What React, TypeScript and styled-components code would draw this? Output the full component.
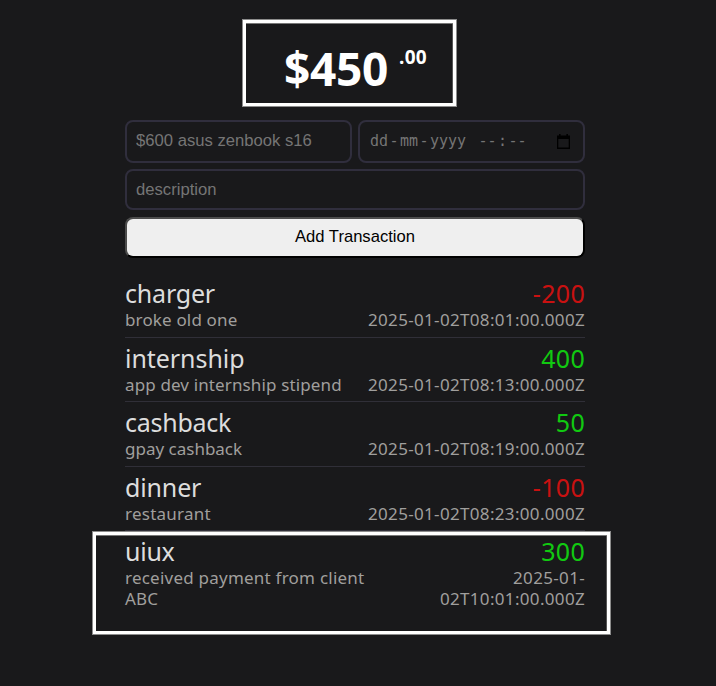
import React from 'react';
import styled, { createGlobalStyle, css } from 'styled-components';

const GlobalStyle = createGlobalStyle`
  *, *::before, *::after { box-sizing: border-box; }
  html, body { margin: 0; background: #19191b; }
  body { font-family: "Noto Sans", sans-serif; color: #ddd; overflow: hidden; }
`;

const Page = styled.main`
  width: 460px;
  height: 686px;
  margin-left: 125px;
  display: flex;
  flex-direction: column;
`;

const highlight = css`
  content: "";
  position: absolute;
  border: 3px solid #fff;
  box-shadow: 0 0 0 1px #8c8c8c, inset 0 1px #777, inset -1px 0 #555;
  pointer-events: none;
`;

const Balance = styled.h1`
  position: relative;
  margin: 0;
  height: 120px;
  padding: 37px 0 0 159px;
  display: flex;
  align-items: flex-start;
  gap: 11px;
  color: #fff;
  font-size: 46px;
  font-weight: 700;
  line-height: 62px;
  letter-spacing: -0.3px;

  &::after {
    ${highlight}
    left: 118px;
    top: 20px;
    width: 213px;
    height: 86px;
  }
`;

const Cents = styled.span`
  font-size: 19px;
  line-height: 26px;
  margin-top: 7px;
  letter-spacing: 0.3px;
`;

const Form = styled.form`
  display: flex;
  flex-direction: column;
`;

const Basic = styled.div`
  display: grid;
  grid-template-columns: 1fr 1fr;
  gap: 6px;
  margin-bottom: 6px;
`;

const field = css`
  border: 2px solid #302e3d;
  border-radius: 8px;
  background: transparent;
  color: #757575;
  font-family: "Liberation Sans", Arial, sans-serif;
  font-size: 16.65px;
`;

const TextField = styled.input<{ $height: number; $bottom: number }>`
  ${field}
  width: 100%;
  height: ${(p) => p.$height}px;
  padding: 0 9px ${(p) => p.$bottom}px;
  outline: none;
  &::placeholder { color: #757575; opacity: 1; }
`;

const DateField = styled.div`
  ${field}
  height: 43px;
  padding: 0 13px 0 10px;
  display: flex;
  align-items: center;
  justify-content: space-between;
`;

const DateParts = styled.span`
  display: flex;
  font-family: "DejaVu Sans Mono", monospace;
  font-size: 15px;
  line-height: 18px;
  margin-top: -1px;
`;

const Part = styled.span<{ $width: number }>`
  width: ${(p) => p.$width}px;
  text-align: center;
  white-space: pre;
`;

const AddButton = styled.button`
  height: 41px;
  margin-top: 7px;
  padding: 0 0 1px;
  border: 2px outset #000;
  border-color: #4c4c4c #000 #000 #4c4c4c;
  border-radius: 8px;
  background: #efefef;
  color: #000;
  font: 16.6px "Liberation Sans", Arial, sans-serif;
`;

const Transactions = styled.ul`
  list-style: none;
  margin: 15.5px 0 0;
  padding: 0;
`;

const Transaction = styled.li`
  position: relative;
  display: flex;
  justify-content: space-between;
  height: 64.4px;
  padding-top: 4.95px;
  border-bottom: 1px solid #302f38;

  &:last-child { border-bottom: 0; }
  &:last-child::after {
    ${highlight}
    left: -32px;
    top: 1px;
    width: 517px;
    height: 102px;
  }
`;

const Side = styled.div<{ $end?: boolean }>`
  display: flex;
  flex-direction: column;
  align-items: ${(p) => (p.$end ? 'flex-end' : 'flex-start')};
`;

const Name = styled.span<{ $tracking: number }>`
  font-size: 25px;
  line-height: 31px;
  letter-spacing: ${(p) => p.$tracking}px;
`;

const Price = styled.span<{ $negative: boolean }>`
  font-size: 25px;
  line-height: 31px;
  letter-spacing: 0.3px;
  color: ${(p) => (p.$negative ? '#c91111' : '#11c911')};
`;

const Detail = styled.span<{ $tracking: number }>`
  font-size: 17px;
  line-height: 21px;
  color: #a09f9d;
  white-space: pre;
  letter-spacing: ${(p) => p.$tracking}px;
`;

type Entry = {
  name: string;
  nameTracking: number;
  description: string[];
  descriptionTracking: number;
  price: number;
  date: string[];
};

const entries: Entry[] = [
  { name: 'charger', nameTracking: -0.2, description: ['broke old one'], descriptionTracking: 0.15, price: -200, date: ['2025-01-02T08:01:00.000Z'] },
  { name: 'internship', nameTracking: -0.05, description: ['app dev internship stipend'], descriptionTracking: 0.13, price: 400, date: ['2025-01-02T08:13:00.000Z'] },
  { name: 'cashback', nameTracking: -0.25, description: ['gpay cashback'], descriptionTracking: 0, price: 50, date: ['2025-01-02T08:19:00.000Z'] },
  { name: 'dinner', nameTracking: -0.15, description: ['restaurant'], descriptionTracking: 0.25, price: -100, date: ['2025-01-02T08:23:00.000Z'] },
  { name: 'uiux', nameTracking: -0.25, description: ['received payment from client', 'ABC'], descriptionTracking: 0.23, price: 300, date: ['2025-01-', '02T10:01:00.000Z'] },
];

const CalendarIcon = () => (
  <svg width="13" height="15" viewBox="0 0 13 15" fill="#000" aria-hidden="true">
    <path fillRule="evenodd" d="M2 0h1.6v1.4h5.8V0H11v1.4h2V15H0V1.4h2zM1.3 5v8.6h10.4V5z" />
  </svg>
);

export default function App() {
  return (
    <>
      <GlobalStyle />
      <Page>
        <Balance>
          $450<Cents>.00</Cents>
        </Balance>
        <Form>
          <Basic>
            <TextField $height={43} $bottom={2} placeholder="$600 asus zenbook s16" />
            <DateField>
              <DateParts>
                <Part $width={18}>dd</Part>
                <Part $width={12}>-</Part>
                <Part $width={18}>mm</Part>
                <Part $width={12}>-</Part>
                <Part $width={36}>yyyy</Part>
                <Part $width={12}> </Part>
                <Part $width={19}>--</Part>
                <Part $width={11}>:</Part>
                <Part $width={19}>--</Part>
              </DateParts>
              <CalendarIcon />
            </DateField>
          </Basic>
          <TextField $height={41} $bottom={0} placeholder="description" />
          <AddButton type="button">Add Transaction</AddButton>
        </Form>
        <Transactions>
          {entries.map((e) => (
            <Transaction key={e.name}>
              <Side>
                <Name $tracking={e.nameTracking}>{e.name}</Name>
                {e.description.map((line) => (
                  <Detail key={line} $tracking={e.descriptionTracking}>{line}</Detail>
                ))}
              </Side>
              <Side $end>
                <Price $negative={e.price < 0}>{e.price}</Price>
                {e.date.map((line) => (
                  <Detail key={line} $tracking={0.33}>{line}</Detail>
                ))}
              </Side>
            </Transaction>
          ))}
        </Transactions>
      </Page>
    </>
  );
}
